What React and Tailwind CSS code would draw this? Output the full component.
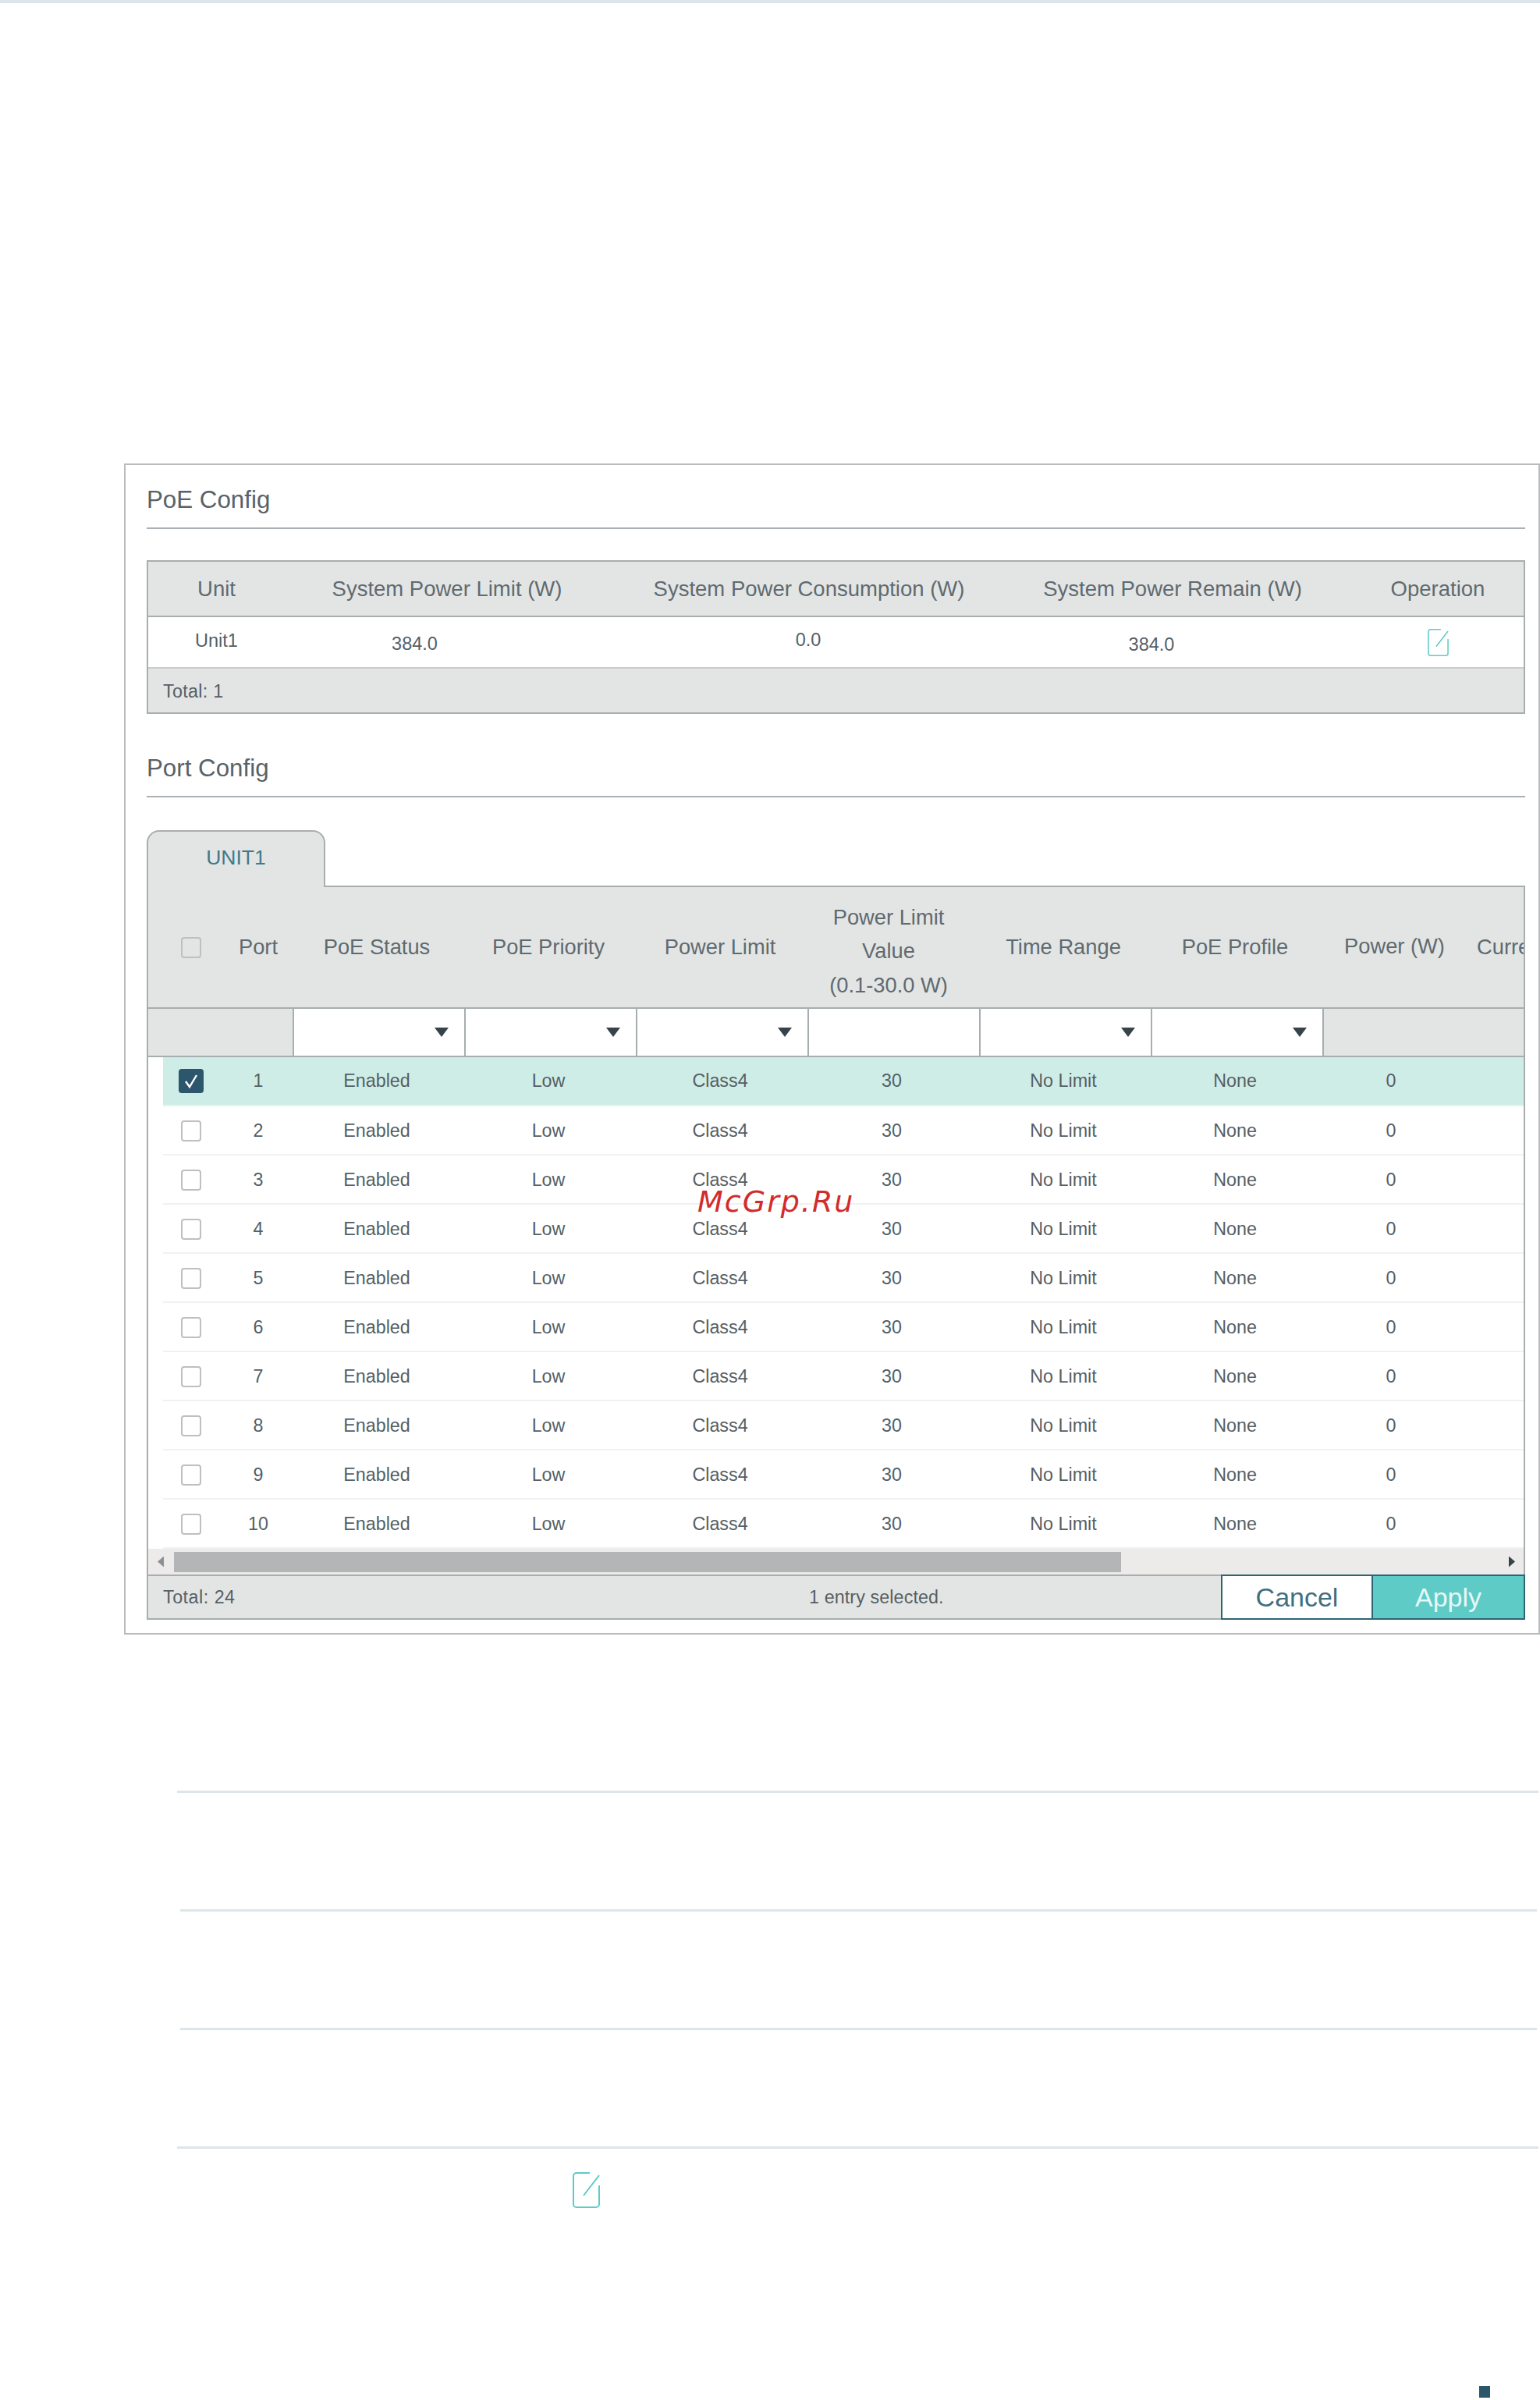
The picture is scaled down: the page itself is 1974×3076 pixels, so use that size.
const PORT_ROWS = [1, 2, 3, 4, 5, 6, 7, 8, 9, 10];

function EditIcon({ className }) {
  return (
    <svg viewBox="0 0 35 46" fill="none" stroke="#5ecbc6" strokeWidth="2" className={className}>
      <path d="M22 1H5a4 4 0 0 0-4 4v36a4 4 0 0 0 4 4h25a4 4 0 0 0 4-4V17" />
      <path d="M34 4L14 30" />
    </svg>
  );
}

function Checkbox({ checked }) {
  if (checked) {
    return (
      <div className="w-[32px] h-[31px] rounded-[4px] bg-[#2b566b] flex items-center justify-center">
        <svg viewBox="0 0 32 31" fill="none" stroke="#ffffff" strokeWidth="2.4" className="w-[32px] h-[31px]">
          <path d="M9 16l5 7 9-15" />
        </svg>
      </div>
    );
  }
  return <div className="w-[26px] h-[27px] rounded-[4px] border-2 border-[#bcc0c1] bg-transparent" />;
}

function SectionTitle({ children }) {
  return (
    <div className="h-[82px] pt-[10px] flex items-center border-b-2 border-[#aab0b3] text-[31.3px] text-[#596268]">
      {children}
    </div>
  );
}

function PoeTable() {
  return (
    <div className="mt-[40px] border-2 border-[#a8adaf] text-[#5f6a70]">
      <div className="h-[71px] flex items-center bg-[#e3e5e4] border-b-2 border-[#a8adaf] text-[27.5px] text-center">
        <div className="w-[175px]">Unit</div>
        <div className="w-[416px]">System Power Limit (W)</div>
        <div className="w-[512px]">System Power Consumption (W)</div>
        <div className="w-[420px]">System Power Remain (W)</div>
        <div className="w-[240px] pl-[20px]">Operation</div>
      </div>
      <div className="h-[66px] flex items-center border-b-2 border-[#c9cccd] text-[23.5px] text-[#555f66] text-center">
        <div className="w-[175px] pb-[2px]">Unit1</div>
        <div className="w-[416px] pr-[83px] pt-[6px]">384.0</div>
        <div className="w-[512px] pb-[4px] pr-[2px]">0.0</div>
        <div className="w-[420px] pr-[54px] pt-[8px]">384.0</div>
        <div className="w-[240px] pl-[20px] flex justify-center">
          <EditIcon className="w-[27px] h-[35px]" />
        </div>
      </div>
      <div className="h-[56px] pt-[2px] flex items-center pl-[19px] bg-[#e3e5e4] text-[23.3px] tracking-[0.3px] text-[#555f66]">Total: 1</div>
    </div>
  );
}

function HeaderCell({ children, className }) {
  return <div className={`shrink-0 text-center ${className}`}>{children}</div>;
}

function PortHeader() {
  return (
    <div className="h-[156px] flex items-center pl-[19px] bg-[#e3e5e4] border-b-2 border-[#a8adaf] text-[27.3px] text-[#5f6a70] overflow-hidden">
      <div className="w-[71px] shrink-0 flex justify-center"><Checkbox /></div>
      <HeaderCell className="w-[93px] pl-[9px]">Port</HeaderCell>
      <HeaderCell className="w-[220px]">PoE Status</HeaderCell>
      <HeaderCell className="w-[220px]">PoE Priority</HeaderCell>
      <HeaderCell className="w-[220px]">Power Limit</HeaderCell>
      <HeaderCell className="w-[220px] pr-[8px] pt-[10px] leading-[43.5px]">
        Power Limit<br />Value<br />(0.1-30.0 W)
      </HeaderCell>
      <HeaderCell className="w-[220px]">Time Range</HeaderCell>
      <HeaderCell className="w-[220px]">PoE Profile</HeaderCell>
      <HeaderCell className="w-[180px] pl-[9px] pb-[2px]">Power (W)</HeaderCell>
      <div className="shrink-0 pl-[20px] whitespace-nowrap">Current (mA)</div>
    </div>
  );
}

function FilterRow() {
  return (
    <div className="h-[62px] flex bg-[#e3e5e4] border-b-2 border-[#a8adaf]">
      <div className="w-[185px] shrink-0" />
      {[true, true, true, false, true, true].map((hasArrow, i) => (
        <div key={i} className="w-[220px] shrink-0 bg-white border-l-2 border-[#a8adaf] flex items-center justify-end pr-[20px]">
          {hasArrow && <div className="w-[18px] h-[12px] bg-[#37434a] [clip-path:polygon(0_0,100%_0,50%_100%)]" />}
        </div>
      ))}
      <div className="border-l-2 border-[#a8adaf] flex-1" />
    </div>
  );
}

function PortRow({ port, selected }) {
  return (
    <div className={`h-[63px] ml-[19px] flex items-center border-b-2 text-center text-[23.3px] text-[#555f66] ${selected ? "bg-[#cfede7] border-[#e8f3f1]" : "pt-[2px] border-[#f0f1f1]"}`}>
      <div className="w-[71px] flex justify-center"><Checkbox checked={selected} /></div>
      <div className="w-[93px] pl-[9px]">{port}</div>
      <div className="w-[220px]">Enabled</div>
      <div className="w-[220px]">Low</div>
      <div className="w-[220px]">Class4</div>
      <div className="w-[220px]">30</div>
      <div className="w-[220px]">No Limit</div>
      <div className="w-[220px]">None</div>
      <div className="w-[180px]">0</div>
    </div>
  );
}

function ScrollBar() {
  return (
    <div className="h-[33px] flex items-center bg-[#ecebe9]">
      <div className="w-[33px] flex justify-end pr-[13px]">
        <div className="w-[8px] h-[14px] bg-[#8b9094] [clip-path:polygon(100%_0,100%_100%,0_50%)]" />
      </div>
      <div className="w-[1214px] h-[26px] bg-[#b4b5b7]" />
      <div className="flex-1 flex justify-end pr-[11px]">
        <div className="w-[8px] h-[14px] bg-[#37434a] [clip-path:polygon(0_0,0_100%,100%_50%)]" />
      </div>
    </div>
  );
}

function PortFooter() {
  return (
    <div className="h-[56px] flex items-center pl-[19px] bg-[#e3e5e4] border-t-2 border-[#a8adaf] text-[23.3px] text-[#555f66]">
      <div className="w-[826px] tracking-[0.5px]">Total: 24</div>
      <div className="w-[530px] pl-[2px] tracking-[0.1px]">1 entry selected.</div>
      <div className="h-[58px] -my-[2px] -mr-[2px] ml-auto flex text-[34px]">
        <button className="w-[195px] border-2 border-[#2f6475] bg-white text-[#3f6f80]">Cancel</button>
        <button className="w-[195px] border-2 border-l-0 border-[#2f6475] bg-[#5ecbc6] text-[#e6f8f6]">Apply</button>
      </div>
    </div>
  );
}

function PortTable() {
  return (
    <div className="mt-[42px]">
      <div className="relative z-10 w-[229px] h-[73px] -mb-[2px] pb-[3px] flex items-center justify-center rounded-t-[16px] border-2 border-b-0 border-[#a8adaf] bg-[#e3e5e4] text-[26.5px] text-[#3f7a8a]">
        UNIT1
      </div>
      <div className="border-2 border-[#a8adaf]">
        <PortHeader />
        <FilterRow />
        {PORT_ROWS.map((port) => (
          <PortRow key={port} port={port} selected={port === 1} />
        ))}
        <ScrollBar />
        <PortFooter />
      </div>
    </div>
  );
}

export default function App() {
  return (
    <div className="relative w-[1974px] h-[3076px] bg-white font-['Liberation_Sans',Arial,sans-serif]">
      <div className="h-[4px] bg-[#dbe5eb]" />

      <div className="ml-[159px] mt-[590px] h-[1501px] border-2 border-[#b9bcbc] pl-[27px] pr-[17px]">
        <SectionTitle>PoE Config</SectionTitle>
        <PoeTable />
        <div className="mt-[25px]">
          <SectionTitle>Port Config</SectionTitle>
        </div>
        <PortTable />
      </div>

      <div className="mt-[200px] ml-[227px] mr-[2px] h-[3px] bg-[#dce6ea]" />
      <div className="mt-[149px] ml-[231px] mr-[4px] h-[3px] bg-[#dce6ea]" />
      <div className="mt-[149px] ml-[231px] mr-[4px] h-[3px] bg-[#dce6ea]" />
      <div className="mt-[149px] ml-[227px] mr-[2px] h-[3px] bg-[#dce6ea]" />

      <div className="mt-[30px] ml-[734px]">
        <EditIcon className="w-[35px] h-[46px]" />
      </div>

      <div className="mt-[228px] ml-[1896px] w-[14px] h-[15px] bg-[#2b566b]" />

      <div className="absolute left-[894px] top-[1512px] text-[38px] italic tracking-[2px] text-[#d22b2b] font-['DejaVu_Sans',sans-serif]">
        McGrp.Ru
      </div>
    </div>
  );
}
